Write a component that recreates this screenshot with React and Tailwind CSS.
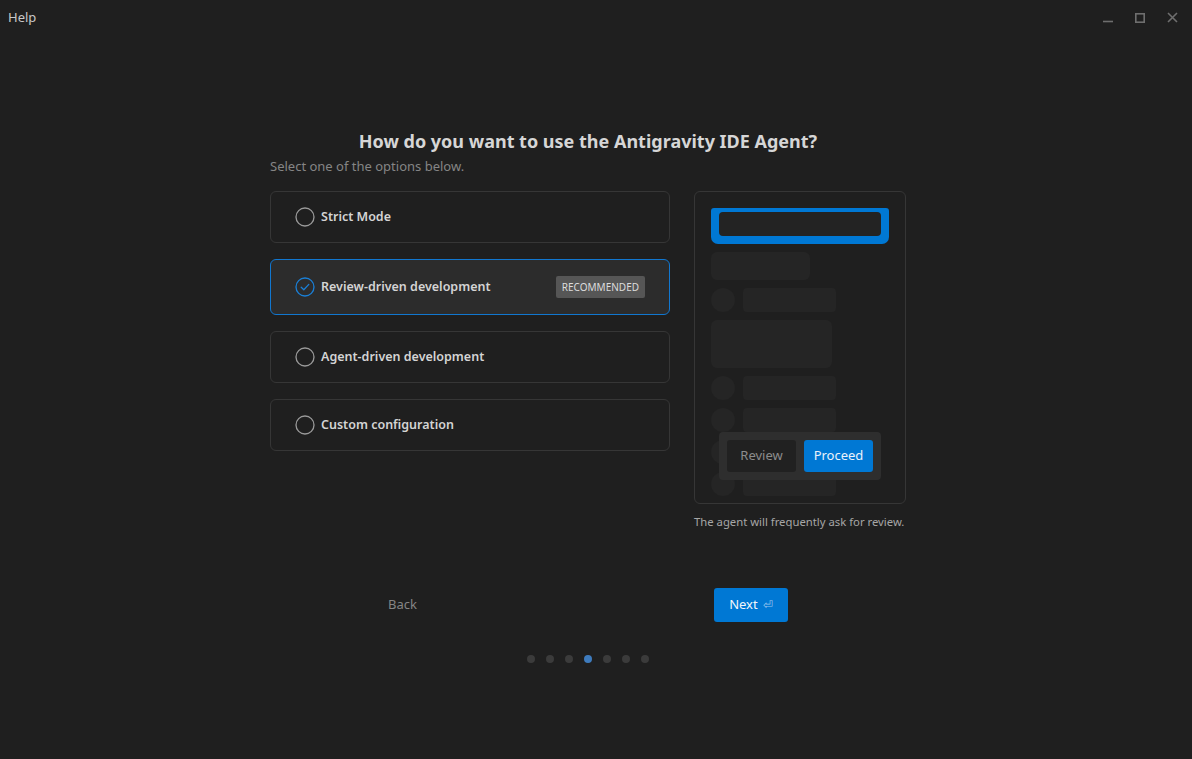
import React from "react";

const font = { fontFamily: '"Noto Sans", "Open Sans", sans-serif' };

function Radio({ checked }) {
  if (checked) {
    return (
      <svg width="20" height="20" viewBox="0 0 20 20" className="shrink-0">
        <circle cx="10" cy="10" r="9" fill="none" stroke="#1a7fd6" strokeWidth="1.3" />
        <path d="M6.2 10.3 L8.8 12.8 L13.8 7.4" fill="none" stroke="#1a7fd6" strokeWidth="1.3" strokeLinecap="round" strokeLinejoin="round" />
      </svg>
    );
  }
  return (
    <svg width="20" height="20" viewBox="0 0 20 20" className="shrink-0">
      <circle cx="10" cy="10" r="9" fill="none" stroke="#9a9a9a" strokeWidth="1.3" />
    </svg>
  );
}

function Option({ label, checked, badge }) {
  return (
    <div
      className={
        "flex items-center rounded-[6px] border pl-[24px] pr-[24px] " +
        (checked ? "h-[56px] border-[#1177d0] bg-[#2c2c2c]" : "h-[52px] border-[#363636] bg-[#1f1f1f]")
      }
    >
      <Radio checked={checked} />
      <span className="ml-[6px] text-[12.5px] font-semibold leading-[20px] text-[#d4d4d4]">{label}</span>
      {badge && (
        <span className="ml-auto flex h-[22px] items-center rounded-[2px] bg-[#565656] px-[6px] text-[10px] leading-none text-[#dcdcdc]">
          {badge}
        </span>
      )}
    </div>
  );
}

function Row() {
  return (
    <div className="flex items-center gap-2">
      <div className="h-6 w-6 rounded-full bg-[#252525]" />
      <div className="h-6 w-[93px] rounded-[4px] bg-[#252525]" />
    </div>
  );
}

export default function App() {
  return (
    <div className="flex h-[759px] w-[1192px] flex-col overflow-hidden bg-[#1f1f1f]" style={font}>
      {/* title bar */}
      <div className="flex h-[35px] items-center justify-between pl-[8px] pr-[14px]">
        <span className="text-[13px] text-[#c8c8c8]">Help</span>
        <div className="flex items-center gap-[22px]">
          <svg width="10" height="10" viewBox="0 0 10 10"><path d="M0 8.5 H10" stroke="#6e6e6e" strokeWidth="1.6" /></svg>
          <svg width="10" height="10" viewBox="0 0 10 10"><rect x="0.8" y="0.8" width="8.4" height="8.4" fill="none" stroke="#6e6e6e" strokeWidth="1.6" /></svg>
          <svg width="11" height="11" viewBox="0 0 11 11"><path d="M1 1 L10 10 M10 1 L1 10" stroke="#6e6e6e" strokeWidth="1.6" /></svg>
        </div>
      </div>

      {/* content */}
      <div className="flex justify-center pr-[16px] pt-[92px]">
        <div className="flex w-[636px] flex-col">
          <h1 className="text-center text-[18px] font-bold leading-[28px] text-[#d6d6d6]">
            How do you want to use the Antigravity IDE Agent?
          </h1>
          <p className="mt-[1px] text-[13px] leading-[20px] text-[#858585]">Select one of the options below.</p>

          <div className="mt-[15px] flex gap-6">
            <div className="flex w-[400px] flex-col gap-4">
              <Option label="Strict Mode" />
              <Option label="Review-driven development" checked badge="RECOMMENDED" />
              <Option label="Agent-driven development" />
              <Option label="Custom configuration" />
            </div>

            <div className="flex w-[212px] flex-col">
              <div className="relative h-[313px] overflow-hidden rounded-[6px] border border-[#363636] bg-[#1f1f1f] px-4 pt-4">
                <div className="flex flex-col gap-2">
                  <div className="h-9 w-[178px] rounded-b-[7px] rounded-t-[3px] bg-[#0078d4] px-2 pb-2 pt-1">
                    <div className="h-full w-full rounded-[4px] bg-[#232323]" />
                  </div>
                  <div className="h-7 w-[99px] rounded-[6px] bg-[#252525]" />
                  <Row />
                  <div className="h-12 w-[121px] rounded-[6px] bg-[#252525]" />
                  <Row />
                  <Row />
                  <Row />
                  <Row />
                </div>
                <div className="absolute left-[24px] top-[240px] flex h-12 w-[162px] items-center gap-2 rounded-[4px] bg-[#2e2e2e] px-2">
                  <div className="flex h-8 w-[69px] items-center justify-center rounded-[3px] bg-[#212121] text-[13px] text-[#8c8c8c]">
                    Review
                  </div>
                  <div className="flex h-8 w-[69px] items-center justify-center rounded-[3px] bg-[#0078d4] text-[13px] text-[#eaf2fb]">
                    Proceed
                  </div>
                </div>
              </div>
              <p className="mt-[10px] whitespace-nowrap text-[11.3px] leading-[16px] text-[#a6a6a6]">The agent will frequently ask for review.</p>
            </div>
          </div>

          <div className="mt-[58px] flex items-center">
            <button className="ml-[102px] h-[34px] px-4 text-[13px] text-[#858585]">Back</button>
            <button className="ml-[281px] flex h-[34px] w-[74px] items-center justify-center gap-[5px] rounded-[3px] bg-[#0078d4] text-[13px] text-[#f2f6fb]">
              Next <span className="text-[12px] text-[#9cc6ee]">⏎</span>
            </button>
          </div>

          <div className="mt-[33px] flex justify-center gap-[11px]">
            {[0, 1, 2, 3, 4, 5, 6].map((i) => (
              <div key={i} className={"h-2 w-2 rounded-full " + (i === 3 ? "bg-[#3e7bbd]" : "bg-[#3b3b3b]")} />
            ))}
          </div>
        </div>
      </div>
    </div>
  );
}
